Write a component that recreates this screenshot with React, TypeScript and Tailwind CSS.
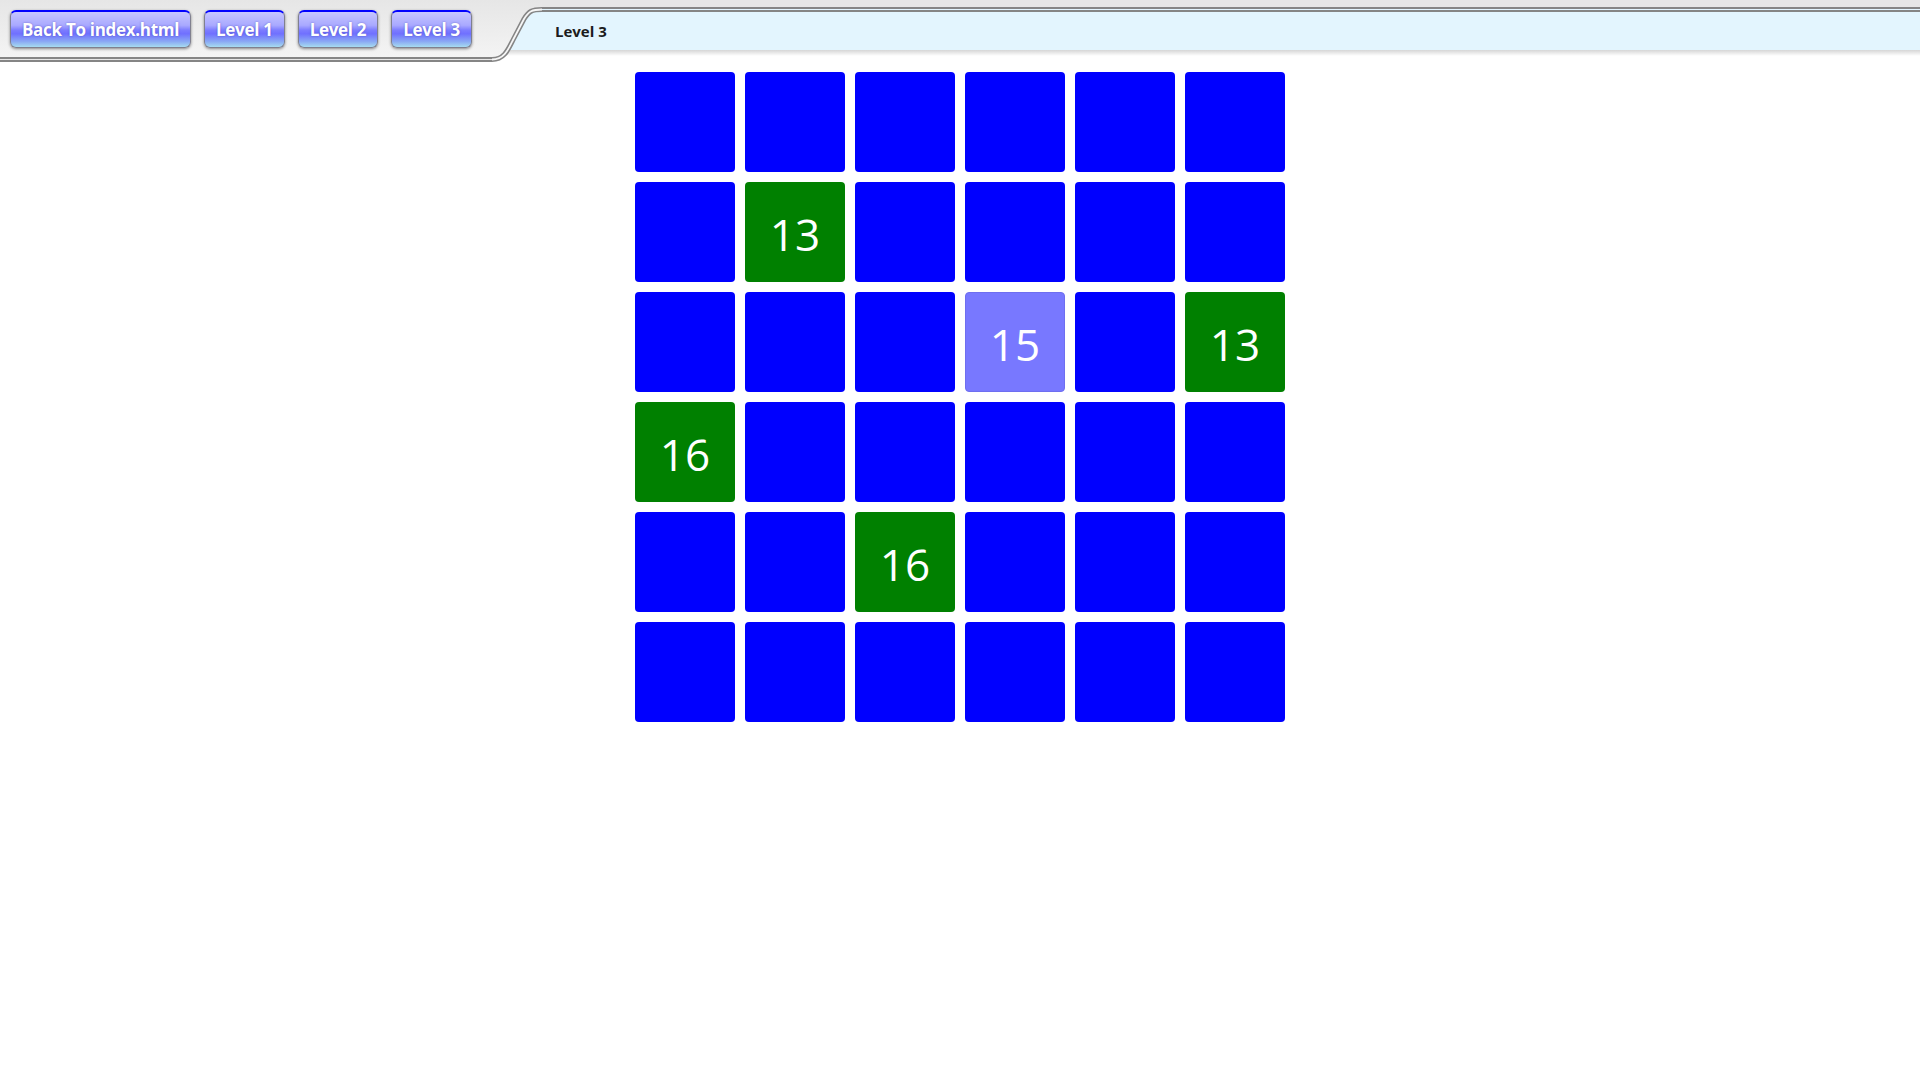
import React from "react";

type Cell = { c: "b" | "g" | "l"; n?: number };

const B: Cell = { c: "b" };
const rows: Cell[][] = [
  [B, B, B, B, B, B],
  [B, { c: "g", n: 13 }, B, B, B, B],
  [B, B, B, { c: "l", n: 15 }, B, { c: "g", n: 13 }],
  [{ c: "g", n: 16 }, B, B, B, B, B],
  [B, B, { c: "g", n: 16 }, B, B, B],
  [B, B, B, B, B, B],
];

function NavButton({ label }: { label: string }) {
  return (
    <button className="h-[38px] px-[11px] rounded-[6px] border border-[#80808f] border-t-2 border-t-[#0000ff] bg-[linear-gradient(to_bottom,#c6c6ff_0%,#a9a9ff_38%,#7c7cff_52%,#7070ff_62%,#8aa8f4_84%,#a6dcf0_100%)] shadow-[0_1px_3px_rgba(0,0,0,0.45)] text-white font-bold text-[17px] leading-none [font-family:'Open_Sans',sans-serif] tracking-[-0.3px] [text-shadow:0_0_2px_rgba(60,60,160,0.6)] cursor-pointer">
      {label}
    </button>
  );
}

function Curve() {
  return (
    <svg width="50" height="62" viewBox="0 0 50 62" className="shrink-0 block">
      <defs>
        <linearGradient id="sh" x1="0" y1="0" x2="0" y2="1">
          <stop offset="0" stopColor="#000" stopOpacity="0.16" />
          <stop offset="1" stopColor="#000" stopOpacity="0" />
        </linearGradient>
        <linearGradient id="gr" x1="0" y1="0" x2="0" y2="57" gradientUnits="userSpaceOnUse">
          <stop offset="0" stopColor="#e6e6e6" />
          <stop offset="0.6" stopColor="#eeeeee" />
          <stop offset="1" stopColor="#f4f4f4" />
        </linearGradient>
      </defs>
      <rect x="0" y="0" width="50" height="62" fill="#ffffff" />
      <rect x="0" y="50" width="50" height="6" fill="url(#sh)" />
      <rect x="0" y="0" width="50" height="50" fill="#e3f5fe" />
      <path
        d="M0,0 H50 V9.5 C40,9.5 37,11 32,19 L21,40 C16,50 12,59.5 0,59.5 Z"
        fill="url(#gr)"
      />
      <path
        d="M0,59.5 C12,59.5 16,50 21,40 L32,19 C37,11 40,9.5 50,9.5"
        fill="none"
        stroke="#858585"
        strokeWidth="5"
      />
      <path
        d="M0,59.5 C12,59.5 16,50 21,40 L32,19 C37,11 40,9.5 50,9.5"
        fill="none"
        stroke="#f6f6f6"
        strokeWidth="1.8"
      />
    </svg>
  );
}

export default function App() {
  return (
    <div className="min-h-screen bg-white [font-family:'Open_Sans',sans-serif]">
      <header className="flex items-start h-[62px]">
        <div className="w-[492px] h-[62px] shrink-0 bg-[linear-gradient(to_bottom,#e6e6e6,#eeeeee_60%,#f4f4f4)] border-b-[5px] border-double border-[#858585] flex items-start gap-[13px] pl-[10px] pt-[10px]">
          <NavButton label="Back To index.html" />
          <NavButton label="Level 1" />
          <NavButton label="Level 2" />
          <NavButton label="Level 3" />
        </div>
        <Curve />
        <div className="flex-1 flex flex-col">
          <div className="h-[7px] bg-[#e6e6e6]" />
          <div className="h-[43px] border-t-[5px] border-double border-[#858585] bg-[#e3f5fe] flex items-center pl-[13px]">
            <span className="text-[15px] font-bold text-[#1c1c1c] [font-family:'Open_Sans',sans-serif]">
              Level 3
            </span>
          </div>
          <div className="h-[6px] bg-[linear-gradient(to_bottom,rgba(0,0,0,0.16),rgba(0,0,0,0))]" />
        </div>
      </header>
      <main className="mt-[10px] flex justify-center">
        <div className="grid grid-cols-6 gap-[10px]">
          {rows.flat().map((cell, i) => (
            <div
              key={i}
              className={
                "w-[100px] h-[100px] rounded-[4px] flex items-center justify-center text-white text-[44px] leading-none pt-[4px] [font-family:'Open_Sans',sans-serif] " +
                (cell.c === "b"
                  ? "bg-[#0000ff]"
                  : cell.c === "g"
                  ? "bg-[#008000]"
                  : "bg-[#7878ff] border border-[#6e6ef0]")
              }
            >
              {cell.n ?? ""}
            </div>
          ))}
        </div>
      </main>
    </div>
  );
}
